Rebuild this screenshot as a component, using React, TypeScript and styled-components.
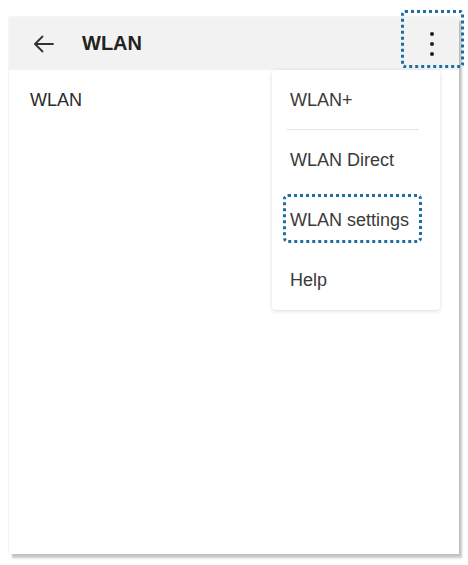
import React from "react";
import styled, {createGlobalStyle} from "styled-components";

const GlobalStyle = createGlobalStyle`
  html, body {
    margin: 0;
    padding: 0;
    background: #fff;
    font-family: "Liberation Sans", Arial, sans-serif;
  }
`;

const Page = styled.div`
  min-height: 565px;
  box-sizing: border-box;
  padding: 17px 0 11px 9px;
`;

const Phone = styled.div`
  position: relative;
  width: 450px;
  height: 537px;
  background: #fff;
  box-shadow: 3px 4px 2px rgba(0, 0, 0, 0.22), 0 0 2px rgba(0, 0, 0, 0.12);
  display: flex;
  flex-direction: column;
`;

const TopBar = styled.header`
  height: 53px;
  background: #f2f2f2;
  display: flex;
  align-items: center;
  padding: 0 0 0 23px;
  flex-shrink: 0;
`;

const BackButton = styled.button`
  border: none;
  background: none;
  padding: 0;
  width: 24px;
  height: 24px;
  display: flex;
  align-items: center;
  justify-content: center;
  color: #333;
`;

const Title = styled.h1`
  margin: 0 0 0 26px;
  font-size: 20px;
  font-weight: 700;
  color: #222;
  flex: 1;
`;

const MoreButton = styled.button`
  border: none;
  background: none;
  padding: 0;
  width: 20px;
  height: 40px;
  margin-right: 17px;
  display: flex;
  flex-direction: column;
  align-items: center;
  justify-content: center;
  gap: 6px;
`;

const Dot = styled.span`
  width: 4px;
  height: 4px;
  border-radius: 50%;
  background: #222;
`;

const Content = styled.div`
  position: relative;
  flex: 1;
  padding: 20px 0 0 21px;
`;

const SectionLabel = styled.div`
  font-size: 18px;
  color: #2a2a2a;
  line-height: 20px;
`;

const Menu = styled.ul`
  position: absolute;
  top: 0;
  right: 19px;
  width: 168px;
  margin: 0;
  padding: 0;
  list-style: none;
  background: #fff;
  border-radius: 4px;
  box-shadow: 0 1px 4px rgba(0, 0, 0, 0.14);
`;

const MenuItem = styled.li<{$divided?: boolean}>`
  position: relative;
  height: 60px;
  display: flex;
  align-items: center;
  padding-left: 18px;
  font-size: 18px;
  color: #3a3a3a;

  ${({$divided}) => $divided && `
    &::after {
      content: "";
      position: absolute;
      left: 15px;
      right: 21px;
      bottom: 0;
      height: 1px;
      background: #e4e4e4;
    }
  `}
`;

// dotted callout drawn over a control
const Callout = styled.span<{$radius?: number}>`
  position: absolute;
  border: 3px dotted #1d6fa3;
  border-radius: ${({$radius}) => $radius ?? 3}px;
  pointer-events: none;
`;

const MoreCallout = styled(Callout)`
  left: 392px;
  top: -7px;
  width: 57px;
  height: 52px;
`;

const ItemCallout = styled(Callout)`
  left: 11px;
  top: 4px;
  width: 133px;
  height: 43px;
`;

const BackArrow = () => (
  <svg width="24" height="24" viewBox="0 0 24 24" fill="none" stroke="currentColor" strokeWidth="1.8" strokeLinecap="round" strokeLinejoin="round">
    <path d="M21 12H3.5" />
    <path d="M10.5 4.5 3 12l7.5 7.5" />
  </svg>
);

const menuItems = ["WLAN+", "WLAN Direct", "WLAN settings", "Help"];

export default function App() {
  return (
    <>
      <GlobalStyle />
      <Page>
        <Phone>
          <TopBar>
            <BackButton>
              <BackArrow />
            </BackButton>
            <Title>WLAN</Title>
            <MoreButton>
              <Dot />
              <Dot />
              <Dot />
            </MoreButton>
          </TopBar>
          <MoreCallout $radius={4} />
          <Content>
            <SectionLabel>WLAN</SectionLabel>
            <Menu>
              {menuItems.map((item, i) => (
                <MenuItem key={item} $divided={i === 0}>
                  {item}
                  {item === "WLAN settings" && <ItemCallout $radius={5} />}
                </MenuItem>
              ))}
            </Menu>
          </Content>
        </Phone>
      </Page>
    </>
  );
}
